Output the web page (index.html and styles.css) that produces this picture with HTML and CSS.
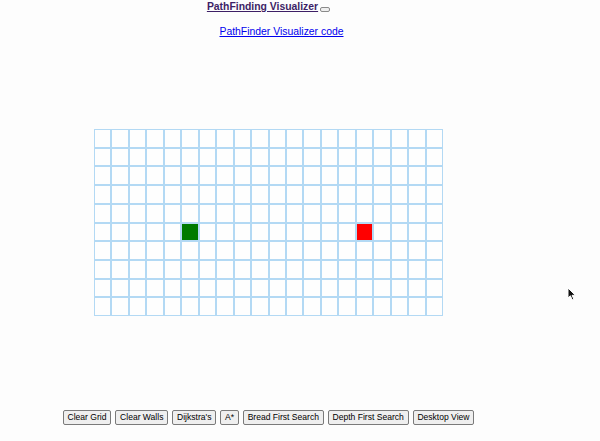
FILE: index.html
```html
<!DOCTYPE html>
<html>
<head>
<meta charset="utf-8">
<title>PathFinding Visualizer</title>
<link rel="stylesheet" href="styles.css">
</head>
<body>
<div class="app">
  <div class="title-line">
    <a class="title" href="#">PathFinding Visualizer</a><button class="toggle"></button>
  </div>
  <div class="code-line"><a class="code-link" href="#">PathFinder Visualizer code</a></div>

  <div class="grid">
    <div class="cell"></div><div class="cell"></div><div class="cell"></div><div class="cell"></div><div class="cell"></div><div class="cell"></div><div class="cell"></div><div class="cell"></div><div class="cell"></div><div class="cell"></div><div class="cell"></div><div class="cell"></div><div class="cell"></div><div class="cell"></div><div class="cell"></div><div class="cell"></div><div class="cell"></div><div class="cell"></div><div class="cell"></div><div class="cell"></div>
    <div class="cell"></div><div class="cell"></div><div class="cell"></div><div class="cell"></div><div class="cell"></div><div class="cell"></div><div class="cell"></div><div class="cell"></div><div class="cell"></div><div class="cell"></div><div class="cell"></div><div class="cell"></div><div class="cell"></div><div class="cell"></div><div class="cell"></div><div class="cell"></div><div class="cell"></div><div class="cell"></div><div class="cell"></div><div class="cell"></div>
    <div class="cell"></div><div class="cell"></div><div class="cell"></div><div class="cell"></div><div class="cell"></div><div class="cell"></div><div class="cell"></div><div class="cell"></div><div class="cell"></div><div class="cell"></div><div class="cell"></div><div class="cell"></div><div class="cell"></div><div class="cell"></div><div class="cell"></div><div class="cell"></div><div class="cell"></div><div class="cell"></div><div class="cell"></div><div class="cell"></div>
    <div class="cell"></div><div class="cell"></div><div class="cell"></div><div class="cell"></div><div class="cell"></div><div class="cell"></div><div class="cell"></div><div class="cell"></div><div class="cell"></div><div class="cell"></div><div class="cell"></div><div class="cell"></div><div class="cell"></div><div class="cell"></div><div class="cell"></div><div class="cell"></div><div class="cell"></div><div class="cell"></div><div class="cell"></div><div class="cell"></div>
    <div class="cell"></div><div class="cell"></div><div class="cell"></div><div class="cell"></div><div class="cell"></div><div class="cell"></div><div class="cell"></div><div class="cell"></div><div class="cell"></div><div class="cell"></div><div class="cell"></div><div class="cell"></div><div class="cell"></div><div class="cell"></div><div class="cell"></div><div class="cell"></div><div class="cell"></div><div class="cell"></div><div class="cell"></div><div class="cell"></div>
    <div class="cell"></div><div class="cell"></div><div class="cell"></div><div class="cell"></div><div class="cell"></div><div class="cell start"></div><div class="cell"></div><div class="cell"></div><div class="cell"></div><div class="cell"></div><div class="cell"></div><div class="cell"></div><div class="cell"></div><div class="cell"></div><div class="cell"></div><div class="cell end"></div><div class="cell"></div><div class="cell"></div><div class="cell"></div><div class="cell"></div>
    <div class="cell"></div><div class="cell"></div><div class="cell"></div><div class="cell"></div><div class="cell"></div><div class="cell"></div><div class="cell"></div><div class="cell"></div><div class="cell"></div><div class="cell"></div><div class="cell"></div><div class="cell"></div><div class="cell"></div><div class="cell"></div><div class="cell"></div><div class="cell"></div><div class="cell"></div><div class="cell"></div><div class="cell"></div><div class="cell"></div>
    <div class="cell"></div><div class="cell"></div><div class="cell"></div><div class="cell"></div><div class="cell"></div><div class="cell"></div><div class="cell"></div><div class="cell"></div><div class="cell"></div><div class="cell"></div><div class="cell"></div><div class="cell"></div><div class="cell"></div><div class="cell"></div><div class="cell"></div><div class="cell"></div><div class="cell"></div><div class="cell"></div><div class="cell"></div><div class="cell"></div>
    <div class="cell"></div><div class="cell"></div><div class="cell"></div><div class="cell"></div><div class="cell"></div><div class="cell"></div><div class="cell"></div><div class="cell"></div><div class="cell"></div><div class="cell"></div><div class="cell"></div><div class="cell"></div><div class="cell"></div><div class="cell"></div><div class="cell"></div><div class="cell"></div><div class="cell"></div><div class="cell"></div><div class="cell"></div><div class="cell"></div>
    <div class="cell"></div><div class="cell"></div><div class="cell"></div><div class="cell"></div><div class="cell"></div><div class="cell"></div><div class="cell"></div><div class="cell"></div><div class="cell"></div><div class="cell"></div><div class="cell"></div><div class="cell"></div><div class="cell"></div><div class="cell"></div><div class="cell"></div><div class="cell"></div><div class="cell"></div><div class="cell"></div><div class="cell"></div><div class="cell"></div>
  </div>

  <div class="controls">
    <button class="btn">Clear Grid</button>
    <button class="btn">Clear Walls</button>
    <button class="btn">Dijkstra's</button>
    <button class="btn">A*</button>
    <button class="btn">Bread First Search</button>
    <button class="btn">Depth First Search</button>
    <button class="btn">Desktop View</button>
  </div>
</div>

<svg class="cursor" width="10" height="14" viewBox="0 0 10 14">
  <path d="M1 1 L1 11 L3.4 8.8 L5.2 12.8 L6.8 12.1 L5.1 8.3 L8.4 8.3 Z" fill="#111" stroke="#fff" stroke-width="1"/>
</svg>
</body>
</html>
```

FILE: styles.css
```css
html, body {
  margin: 0;
  padding: 0;
  background: #fdfdfd;
}

body {
  font-family: "Liberation Sans", Arial, sans-serif;
  width: 600px;
  height: 441px;
  overflow: hidden;
  position: relative;
}

.app {
  width: 537px;
  display: flex;
  flex-direction: column;
  align-items: center;
}

.title-line {
  height: 14px;
  line-height: 13px;
  display: flex;
  align-items: baseline;
}

.title {
  font-size: 10.4px;
  font-weight: bold;
  color: #3d1f66;
  text-decoration: underline;
}

.toggle {
  width: 10px;
  height: 5px;
  margin-left: 2px;
  padding: 0;
  border: 1px solid #8a8a8a;
  border-radius: 2px;
  background: #efefef;
  align-self: flex-end;
  margin-bottom: 2px;
}

.code-line {
  margin-top: 9px;
  padding-left: 26px;
  line-height: 13px;
}

.code-link {
  font-size: 10.4px;
  color: #0000ee;
  text-decoration: underline;
}

.grid {
  margin-top: 91px;
  width: 349px;
  height: 187px;
  display: grid;
  grid-template-columns: repeat(20, 1fr);
  grid-template-rows: repeat(10, 1fr);
  background: #fefefe;
}

.cell {
  box-sizing: border-box;
  border: 1px solid #b3d9f4;
}

.cell.start {
  background: #007a00;
}

.cell.end {
  background: #ff0000;
}

.controls {
  margin-top: 94px;
  display: flex;
  gap: 4px;
}

.btn {
  font-family: "Liberation Sans", Arial, sans-serif;
  font-size: 8.55px;
  line-height: 13px;
  height: 15px;
  padding: 0 3.8px;
  color: #000;
  background: #efefef;
  border: 1px solid #7a7a7a;
  border-radius: 2px;
  white-space: nowrap;
}

.cursor {
  position: absolute;
  left: 567px;
  top: 287px;
}
```
